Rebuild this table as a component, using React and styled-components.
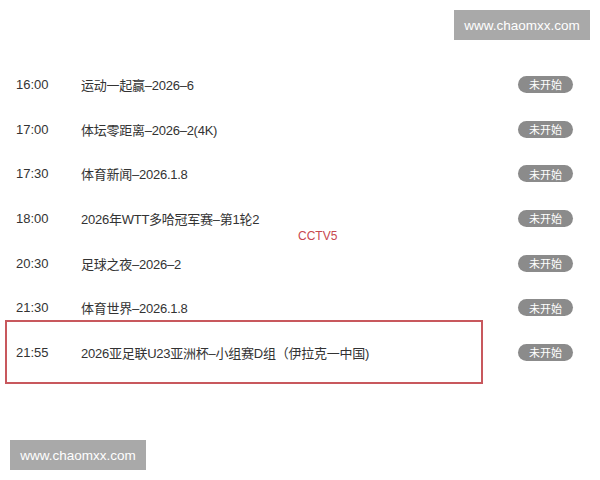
import styled, { createGlobalStyle } from 'styled-components';

const GlobalStyle = createGlobalStyle`
  html, body {
    margin: 0;
    padding: 0;
    background: #ffffff;
  }
  body {
    font-family: "Liberation Sans", "Noto Sans CJK SC", sans-serif;
  }
`;

const programs = [
  { time: '16:00', title: '运动一起赢–2026–6' },
  { time: '17:00', title: '体坛零距离–2026–2(4K)' },
  { time: '17:30', title: '体育新闻–2026.1.8' },
  { time: '18:00', title: '2026年WTT多哈冠军赛–第1轮2' },
  { time: '20:30', title: '足球之夜–2026–2' },
  { time: '21:30', title: '体育世界–2026.1.8' },
  { time: '21:55', title: '2026亚足联U23亚洲杯–小组赛D组（伊拉克一中国)', highlight: true },
];

function App() {
  return (
    <Page>
      <GlobalStyle />
      <Watermark $top>www.chaomxx.com</Watermark>
      <List>
        {programs.map((p) => (
          <Row key={p.time}>
            <Main $highlight={p.highlight}>
              <Time>{p.time}</Time>
              <Title>{p.title}</Title>
            </Main>
            <Badge>未开始</Badge>
          </Row>
        ))}
        <Channel>CCTV5</Channel>
      </List>
      <Watermark>www.chaomxx.com</Watermark>
    </Page>
  );
}

const Page = styled.div`
  position: relative;
  width: 600px;
  height: 480px;
  overflow: hidden;
  background: #ffffff;
`;

const Watermark = styled.div`
  position: absolute;
  ${(p) => (p.$top ? 'top: 10px; right: 10px;' : 'bottom: 10px; left: 10px;')}
  width: 136px;
  height: 30px;
  display: flex;
  align-items: center;
  justify-content: center;
  background: #a9a9a9;
  color: #ffffff;
  font-size: 13.5px;
`;

const List = styled.div`
  position: relative;
  display: flex;
  flex-direction: column;
  padding: 62px 27px 0 16px;
`;

const Row = styled.div`
  display: flex;
  align-items: center;
  height: 44.7px;
`;

const Main = styled.div`
  flex: 1;
  display: flex;
  align-items: center;
  box-sizing: border-box;
  ${(p) =>
    p.$highlight &&
    `
    flex: none;
    width: 478px;
    height: 64px;
    margin-left: -11px;
    padding-left: 9px;
    border: 2px solid #c8585d;
  `}
`;

const Time = styled.span`
  width: 65px;
  font-size: 13px;
  color: #333333;
`;

const Title = styled.span`
  font-size: 13px;
  letter-spacing: -0.25px;
  color: #333333;
  white-space: nowrap;
`;

const Badge = styled.span`
  margin-left: auto;
  width: 55px;
  height: 17px;
  border-radius: 9px;
  background: #8b8b8b;
  color: #ffffff;
  font-size: 11px;
  display: flex;
  align-items: center;
  justify-content: center;
`;

const Channel = styled.span`
  position: absolute;
  left: 298px;
  top: 229px;
  font-size: 12px;
  color: #c8484f;
`;

export default App;
